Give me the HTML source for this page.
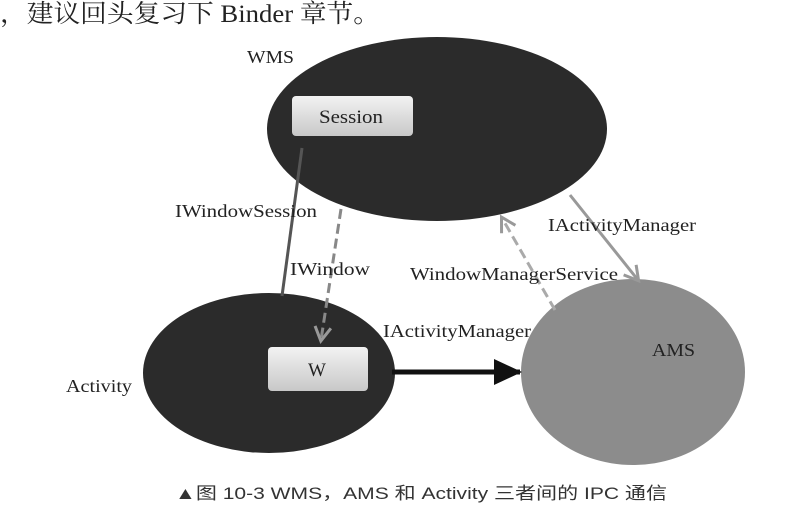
<html><body style="margin:0;width:800px;height:527px;background:#fff;overflow:hidden;position:relative;font-family:'Liberation Serif','Noto Serif CJK SC',serif">
<svg width="800" height="527" style="position:absolute;left:0;top:0">
<defs><linearGradient id="g" x1="0" y1="0" x2="0" y2="1"><stop offset="0" stop-color="#f2f2f2"/><stop offset="1" stop-color="#c8c8c8"/></linearGradient>
<marker id="a" markerUnits="userSpaceOnUse" markerWidth="30" markerHeight="30" refX="26" refY="15" orient="auto"><path d="M0,2L28,15L0,28z" fill="#111"/></marker>
<marker id="b" markerUnits="userSpaceOnUse" markerWidth="20" markerHeight="20" refX="15" refY="10" orient="auto"><path d="M2,2L16,10L2,18" fill="none" stroke="#999" stroke-width="3"/></marker></defs>
<text x="0" y="22" font-size="25" fill="#222" textLength="380" lengthAdjust="spacingAndGlyphs">，建议回头复习下 Binder 章节。</text>
<ellipse cx="437" cy="129" rx="170" ry="92" fill="#2b2b2b"/>
<ellipse cx="269" cy="373" rx="126" ry="80" fill="#2b2b2b"/>
<ellipse cx="633" cy="372" rx="112" ry="93" fill="#8c8c8c"/>
<rect x="292" y="96" width="121" height="40" rx="4" fill="url(#g)"/>
<rect x="268" y="347" width="100" height="44" rx="4" fill="url(#g)"/>
<line x1="282" y1="296" x2="302" y2="148" stroke="#555" stroke-width="3"/>
<line x1="341" y1="209" x2="321" y2="340" stroke="#888" stroke-width="3" stroke-dasharray="10,5" marker-end="url(#b)"/>
<line x1="392" y1="372" x2="520" y2="372" stroke="#111" stroke-width="5" marker-end="url(#a)"/>
<line x1="555" y1="310" x2="502" y2="218" stroke="#aaa" stroke-width="3" stroke-dasharray="10,5" marker-end="url(#b)"/>
<line x1="570" y1="195" x2="638" y2="280" stroke="#999" stroke-width="3" marker-end="url(#b)"/>
<g font-size="18" fill="#222" lengthAdjust="spacingAndGlyphs">
<text x="247" y="63" textLength="47" lengthAdjust="spacingAndGlyphs">WMS</text>
<text x="319" y="123" font-size="19" textLength="64" lengthAdjust="spacingAndGlyphs">Session</text>
<text x="308" y="376" font-size="19">W</text>
<text x="175" y="217" textLength="142" lengthAdjust="spacingAndGlyphs">IWindowSession</text>
<text x="290" y="275" textLength="80" lengthAdjust="spacingAndGlyphs">IWindow</text>
<text x="410" y="280" textLength="208" lengthAdjust="spacingAndGlyphs">WindowManagerService</text>
<text x="548" y="231" textLength="148" lengthAdjust="spacingAndGlyphs">IActivityManager</text>
<text x="383" y="337" textLength="148" lengthAdjust="spacingAndGlyphs">IActivityManager</text>
<text x="652" y="356" textLength="43" lengthAdjust="spacingAndGlyphs">AMS</text>
<text x="66" y="392" textLength="66" lengthAdjust="spacingAndGlyphs">Activity</text>
</g>
<text x="175" y="499" font-size="17" fill="#333" font-family="'Liberation Sans','Noto Sans CJK SC',sans-serif" textLength="492" lengthAdjust="spacingAndGlyphs">▲图 10-3  WMS，AMS 和 Activity 三者间的 IPC 通信</text>
</svg>
</body></html>
